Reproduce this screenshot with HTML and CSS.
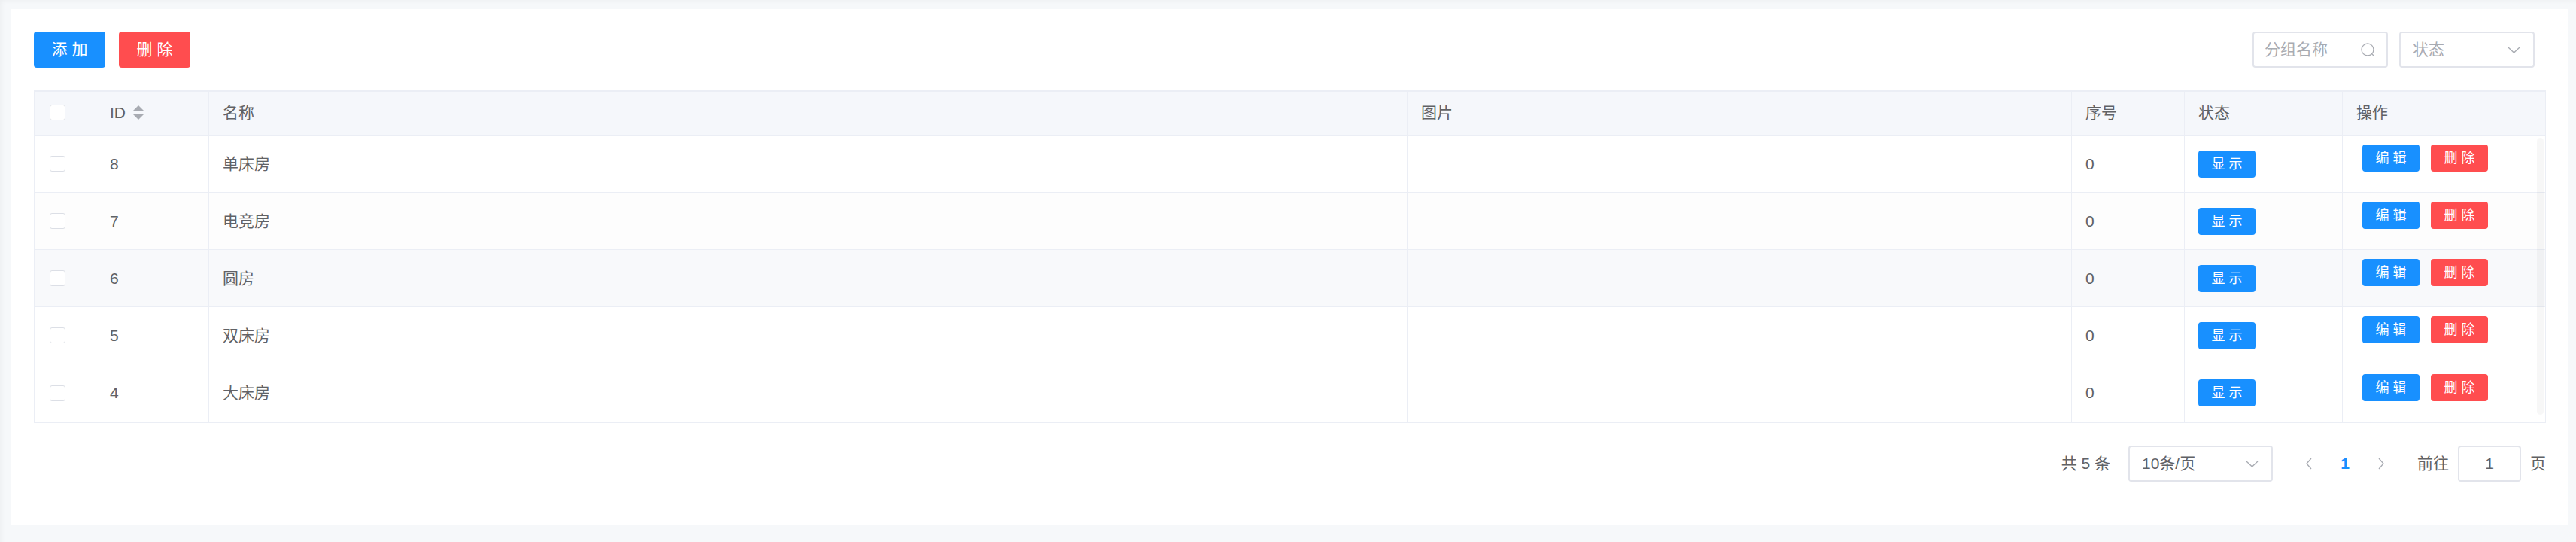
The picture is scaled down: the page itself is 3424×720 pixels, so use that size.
FILE: index.html
```
<!DOCTYPE html>
<html lang="zh-CN">
<head>
	<title>分组</title>
	<meta charset="UTF-8">
	<meta name="viewport" content="width=device-width, initial-scale=1">
	<link rel="stylesheet" href="styles.css">
</head>
<body>

<main class="panel">
	<div class="toolbar">
		<div class="actions">
			<button type="button" class="btn primary">添 加</button>
			<button type="button" class="btn danger">删 除</button>
		</div>
		<form class="filters">
			<div class="field search">
				<input type="text" placeholder="分组名称" aria-label="分组名称">
				<svg class="icon" viewBox="0 0 21 21"><circle cx="11" cy="10" r="8"/><path d="M16 15L20 19"/></svg>
			</div>
			<div class="field status">
				<select aria-label="状态">
					<option>状态</option>
				</select>
				<svg class="icon" viewBox="0 0 21 21"><path d="M3 7L10.500 14L18 7"/></svg>
			</div>
		</form>
	</div>

	<div class="tablewrap">
		<table class="list">
			<colgroup>
				<col class="c-check">
				<col class="c-id">
				<col class="c-name">
				<col class="c-pic">
				<col class="c-sort">
				<col class="c-status">
				<col class="c-ops">
			</colgroup>
			<thead>
				<tr>
					<th><input type="checkbox" aria-label="全选"></th>
					<th><span class="sortable">ID <span class="carets"></span></span></th>
					<th>名称</th>
					<th>图片</th>
					<th>序号</th>
					<th>状态</th>
					<th>操作</th>
				</tr>
			</thead>
			<tbody>
				<tr>
					<td><input type="checkbox" aria-label="单床房"></td>
					<td>8</td>
					<td>单床房</td>
					<td></td>
					<td>0</td>
					<td><button type="button" class="btn small primary">显 示</button></td>
					<td><div class="ops"><button type="button" class="btn small primary">编 辑</button><button type="button" class="btn small danger">删 除</button></div></td>
				</tr>
				<tr class="striped">
					<td><input type="checkbox" aria-label="电竞房"></td>
					<td>7</td>
					<td>电竞房</td>
					<td></td>
					<td>0</td>
					<td><button type="button" class="btn small primary">显 示</button></td>
					<td><div class="ops"><button type="button" class="btn small primary">编 辑</button><button type="button" class="btn small danger">删 除</button></div></td>
				</tr>
				<tr class="current">
					<td><input type="checkbox" aria-label="圆房"></td>
					<td>6</td>
					<td>圆房</td>
					<td></td>
					<td>0</td>
					<td><button type="button" class="btn small primary">显 示</button></td>
					<td><div class="ops"><button type="button" class="btn small primary">编 辑</button><button type="button" class="btn small danger">删 除</button></div></td>
				</tr>
				<tr>
					<td><input type="checkbox" aria-label="双床房"></td>
					<td>5</td>
					<td>双床房</td>
					<td></td>
					<td>0</td>
					<td><button type="button" class="btn small primary">显 示</button></td>
					<td><div class="ops"><button type="button" class="btn small primary">编 辑</button><button type="button" class="btn small danger">删 除</button></div></td>
				</tr>
				<tr>
					<td><input type="checkbox" aria-label="大床房"></td>
					<td>4</td>
					<td>大床房</td>
					<td></td>
					<td>0</td>
					<td><button type="button" class="btn small primary">显 示</button></td>
					<td><div class="ops"><button type="button" class="btn small primary">编 辑</button><button type="button" class="btn small danger">删 除</button></div></td>
				</tr>
			</tbody>
		</table>
		<div class="scrollbar"></div>
	</div>

	<nav class="pager">
		<span class="total">共 5 条</span>
		<div class="field size">
			<select aria-label="每页条数">
				<option>10条/页</option>
			</select>
			<svg class="icon" viewBox="0 0 21 21"><path d="M3 7L10.500 14L18 7"/></svg>
		</div>
		<div class="pages">
			<button type="button" aria-label="上一页"><svg class="icon" viewBox="0 0 18 18"><path d="M12 2L6 9L12 16"/></svg></button>
			<button type="button" class="active">1</button>
			<button type="button" aria-label="下一页"><svg class="icon" viewBox="0 0 18 18"><path d="M6 2L12 9L6 16"/></svg></button>
		</div>
		<label class="jump">前往 <input type="text" value="1"> 页</label>
	</nav>
</main>

</body>
</html>
```
FILE: styles.css
```
* { box-sizing: border-box; }

body {
	margin: 0;
	min-height: 100vh;
	padding: 12px 10px 22px 15px;
	background: #f6f8fa;
	box-shadow: inset 4px 3px 6px -2px rgba(0, 0, 0, 0.04);
	color: #606266;
	font: 21px/24px "Liberation Sans", "Noto Sans CJK SC", sans-serif;
}

button, input, select {
	margin: 0;
	color: inherit;
	font: inherit;
}

.panel {
	min-height: 686px;
	padding: 30px;
	background: white;
}

.toolbar {
	display: flex;
	justify-content: space-between;
	margin-bottom: 30px;
}

.actions {
	display: flex;
	gap: 18px;
}

.filters {
	display: flex;
	gap: 15px;
	margin-right: 15px;
}

.btn {
	min-width: 95px;
	height: 48px;
	padding: 0;
	border: 0;
	border-radius: 4px;
	color: white;
	white-space: nowrap;
}

.btn.small {
	display: block;
	min-width: 76px;
	height: 36px;
	font-size: 18px;
}

.primary { background: #1890ff; }
.danger { background: #ff4d4f; }

/* text boxes and drop-downs */
.field {
	position: relative;
	width: 180px;
	height: 48px;
}

.field.size { width: 192px; }

.field input,
.field select,
.jump input {
	width: 100%;
	height: 48px;
	padding: 0 40px 0 16px;
	border: 2px solid #e2e4eb;
	border-radius: 4px;
	background: white;
	appearance: none;
}

.field input { padding-left: 14px; }
.field input::placeholder { color: #a8abb2; }
.status select { color: #a8abb2; }

.icon {
	display: block;
	width: 21px;
	height: 21px;
	fill: none;
	stroke: #a8abb2;
	stroke-width: 1.3;
}

.field .icon {
	position: absolute;
	top: 14px;
	right: 17px;
	pointer-events: none;
}

/* table */
.tablewrap {
	position: relative;
	border: 2px solid #ebeef5;
	border-right-width: 0;
}

.list {
	width: 100%;
	table-layout: fixed;
	border-collapse: separate;
	border-spacing: 0;
}

.c-check { width: 81px; }
.c-id { width: 150px; }
.c-name { width: 47.74%; }
.c-sort { width: 150px; }
.c-status { width: 210px; }
.c-ops { width: 270px; }

.list th,
.list td {
	height: 76px;
	padding: 0 18px;
	border-right: 1px solid #ebeef5;
	border-bottom: 1px solid #ebeef5;
	text-align: left;
	font-weight: normal;
}

.list th {
	height: 58px;
	padding-bottom: 2px;
	background: #f5f7fb;
}

.list th:first-child,
.list td:first-child { padding-left: 19px; }

/* the wrapper draws the bottom line */
.list tr:last-child td { border-bottom: 0; }

.striped { background: #fdfdfd; }
.current { background: #f8f9fb; }

.list input {
	display: block;
	width: 21px;
	height: 21px;
	border: 1px solid #dcdfe6;
	border-radius: 3px;
	background: white;
	appearance: none;
}

.sortable {
	display: flex;
	align-items: center;
	gap: 10px;
}

.carets::before,
.carets::after {
	content: "";
	display: block;
	border: 7px solid transparent;
	border-top-width: 0;
	border-bottom-color: #a8abb2;
}

.carets::after {
	margin-top: 5px;
	border-width: 7px 7px 0;
	border-top-color: #a8abb2;
}

.ops {
	display: flex;
	gap: 15px;
	margin: 0 0 15px 8px;
}

.scrollbar {
	position: absolute;
	top: 61px;
	right: 3px;
	bottom: 9px;
	width: 9px;
	border-radius: 5px;
	background: rgba(0, 0, 0, 0.03);
}

/* pagination */
.pager {
	display: flex;
	align-items: center;
	justify-content: flex-end;
	gap: 24px;
	margin-top: 30px;
}

.pages { display: flex; }

.pages button {
	display: flex;
	align-items: center;
	justify-content: center;
	width: 48px;
	height: 48px;
	padding: 0;
	border: 0;
	background: none;
}

.pages .icon {
	width: 18px;
	height: 18px;
}

.pages .active {
	color: #1890ff;
	font-weight: bold;
}

.jump {
	display: flex;
	align-items: center;
	gap: 12px;
}

.jump input {
	width: 84px;
	padding: 0;
	text-align: center;
}
```
